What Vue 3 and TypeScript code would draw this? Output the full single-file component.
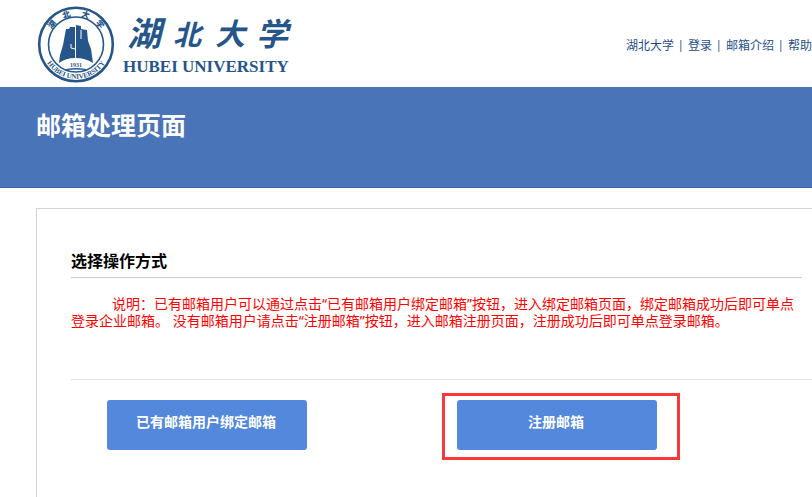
<script setup lang="ts">
interface NavLink {
  label: string
  href: string
}

interface RingCharacter {
  char: string
  angle: number
}

const links: NavLink[] = [
  { label: '湖北大学', href: '#home' },
  { label: '登录', href: '#login' },
  { label: '邮箱介绍', href: '#about' },
  { label: '帮助', href: '#help' },
]

// Characters set around the top of the emblem, in degrees from its vertical axis.
const ring: RingCharacter[] = [
  { char: '湖', angle: -50 },
  { char: '北', angle: -18 },
  { char: '大', angle: 18 },
  { char: '学', angle: 50 },
]
</script>

<template>
  <div class="page">
    <header class="header">
      <a class="brand" href="#home" aria-label="湖北大学 HUBEI UNIVERSITY">
        <svg class="logo" width="256" height="81" viewBox="0 0 256 81">
          <defs>
            <path id="arc-bottom" d="M5 46A34.300 34.300 0 0 0 73 46" />
          </defs>
          <circle class="line" cx="39" cy="41.500" r="36.800" stroke-width="2.600" />
          <circle class="line" cx="39" cy="41.500" r="27.500" stroke-width="1.600" />
          <g class="ink">
            <path d="M29 26h3l1-2h5v31q-9 0-16 5l1-8 3-10z" />
            <path d="M39 22l5 1v3l6 1 1 11 3 8 2 14q-8-5-17-5z" />
            <path d="M29 66q10-2 20 0v1q-10-1-20 0z" />
          </g>
          <path class="window" d="M34 41v4l4 1M38.500 25v29M44 27v9" />
          <text
            v-for="item in ring"
            :key="item.char"
            class="ring-cn"
            x="39"
            y="13"
            text-anchor="middle"
            :transform="`rotate(${item.angle} 39 41.5)`"
          >{{ item.char }}</text>
          <text class="ring-en"><textPath href="#arc-bottom" startOffset="50%" text-anchor="middle">HUBEI UNIVERSITY</textPath></text>
          <text class="year" x="39" y="64" text-anchor="middle">1931</text>
          <g class="script">
            <text class="hu" x="90" y="43">湖</text>
            <text class="bei" x="136" y="42">北</text>
            <text class="da" x="178" y="42">大</text>
            <text class="xue" x="219" y="43">学</text>
          </g>
          <text class="latin" x="86" y="69">HUBEI UNIVERSITY</text>
        </svg>
      </a>
      <nav class="nav">
        <template v-for="(link, i) in links" :key="link.label">
          <span v-if="i > 0" class="divider"></span>
          <a :href="link.href">{{ link.label }}</a>
        </template>
      </nav>
    </header>

    <div class="banner">
      <h1>邮箱处理页面</h1>
    </div>

    <main class="panel">
      <h2>选择操作方式</h2>
      <p class="note">说明：已有邮箱用户可以通过点击“已有邮箱用户绑定邮箱”按钮，进入绑定邮箱页面，绑定邮箱成功后即可单点登录企业邮箱。 没有邮箱用户请点击“注册邮箱”按钮，进入邮箱注册页面，注册成功后即可单点登录邮箱。</p>
      <div class="actions">
        <button type="button">已有邮箱用户绑定邮箱</button>
        <div class="marked">
          <button type="button">注册邮箱</button>
        </div>
      </div>
    </main>
  </div>
</template>

<style>
body {
  background: #fff;
}
</style>

<style scoped>
.page {
  display: flex;
  flex-direction: column;
  min-height: 100vh;
  overflow: hidden;
  font-family: "Noto Sans", "Noto Sans CJK SC", sans-serif;
  font-size: 14px;
}

.header {
  display: flex;
  justify-content: space-between;
  align-items: center;
  height: 87px;
  padding-left: 37px;
}

.brand,
.logo {
  display: block;
}

.line {
  fill: none;
  stroke: #265689;
}

.ink,
.script,
.latin,
.ring-cn,
.ring-en {
  fill: #265689;
}

.window {
  fill: none;
  stroke: #fff;
  stroke-width: 1;
}

.ring-cn {
  font: 900 8px "Noto Sans CJK SC", sans-serif;
}

.ring-en {
  font: bold 7px "Liberation Serif", serif;
}

.year {
  font: bold 6px "Liberation Serif", serif;
  fill: #265689;
}

.script {
  font-family: "Noto Sans CJK SC", sans-serif;
  font-style: italic;
  font-weight: 700;
}

.hu {
  font-size: 34px;
}

.bei {
  font-size: 28px;
}

.da {
  font-size: 30px;
}

.xue {
  font-size: 32px;
}

.latin {
  font: bold 17px "Liberation Serif", serif;
}

.nav {
  display: flex;
  align-items: center;
  gap: 6px;
  padding-top: 4px;
  font-size: 12px;
  line-height: 16px;
  white-space: nowrap;
}

.nav a {
  color: #1f4f86;
  text-decoration: none;
}

.divider {
  width: 2px;
  height: 12px;
  background: linear-gradient(90deg, #a39a90 50%, #a9ceff 50%);
}

.banner {
  box-sizing: border-box;
  height: 101px;
  padding: 20px 36px;
  border-bottom: 1px solid #3c66a8;
  background: #4a74b8;
}

h1 {
  margin: 0;
  color: #fff;
  font-size: 25px;
  font-weight: 700;
  line-height: 36px;
}

.panel {
  flex: 1;
  margin: 20px 0 0 36px;
  padding: 40px 0 36px 34px;
  border: solid #d3d3d3;
  border-width: 1px 0 0 1px;
}

h2 {
  margin: 0 10px 0 0;
  padding-bottom: 4px;
  border-bottom: 1px solid #c9cddf;
  color: #000;
  font-size: 16px;
  font-weight: 700;
  line-height: 24px;
}

.note {
  min-height: 84px;
  margin: 0 10px 0 0;
  padding-top: 17px;
  color: #f00;
  line-height: 17px;
  text-indent: 41px;
}

.actions {
  display: flex;
  gap: 150px;
  padding: 20px 0 0 36px;
  border-top: 1px solid #dfdfdf;
}

button {
  width: 200px;
  height: 50px;
  padding: 0 2px 6px 0;
  border: 0;
  border-radius: 3px;
  background: #5488dc;
  color: #fff;
  font-family: inherit;
  font-size: 14px;
  font-weight: 700;
  line-height: 20px;
  cursor: pointer;
}

.marked {
  position: relative;
}

.marked::after {
  content: "";
  position: absolute;
  inset: -7px -23px -10px -15px;
  border: 3px solid #fb3838;
  pointer-events: none;
}
</style>
